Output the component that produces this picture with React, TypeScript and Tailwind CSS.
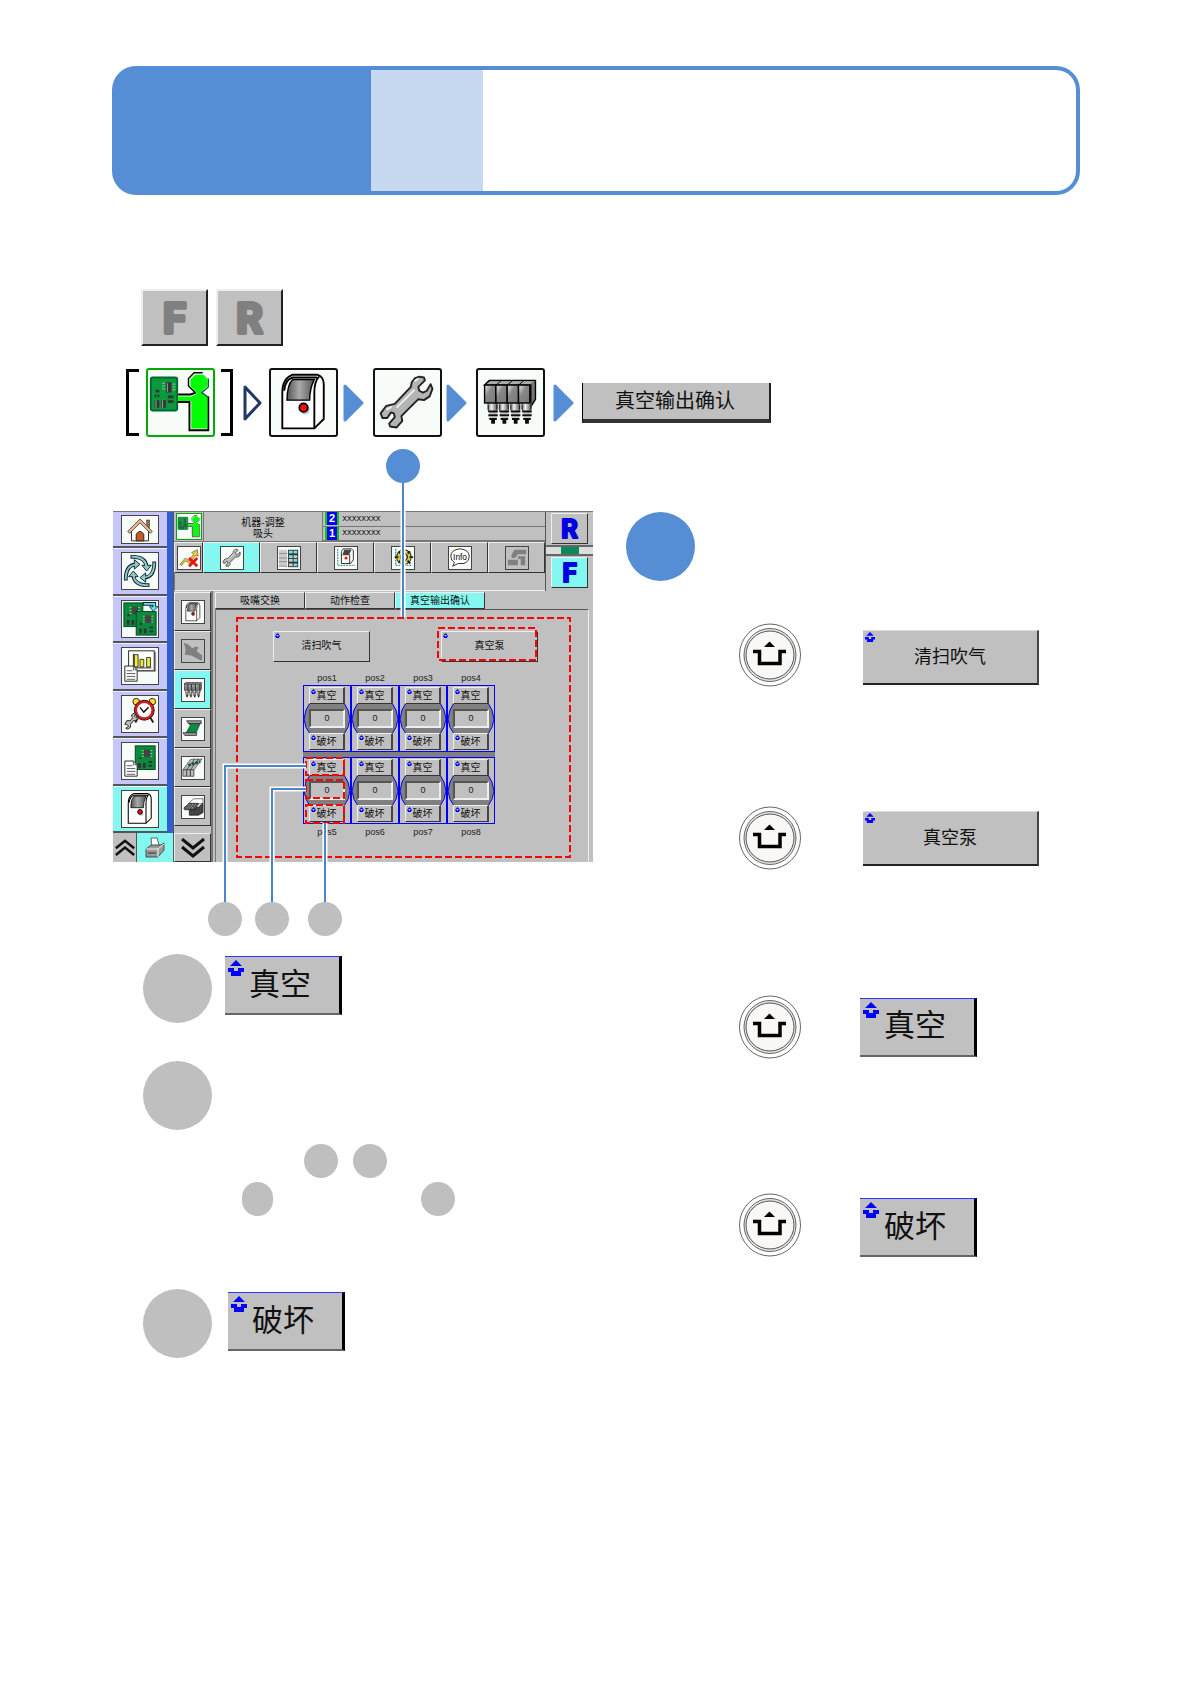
import type { ReactNode } from "react";

/* ---------- drawings ---------- */

function Machine() {
  return (
    <svg viewBox="0 0 69 69" className="h-full w-full" aria-hidden="true">
      <defs>
        <linearGradient id="glass" x1="0" x2="1">
          <stop offset="0" stopColor="#555" />
          <stop offset="0.45" stopColor="#aaa" />
          <stop offset="1" stopColor="#555" />
        </linearGradient>
      </defs>
      <path d="M12 62V24Q12 9 23 5H49Q56 7 56 15V52L46 62Z" fill="#fff" stroke="#000" strokeWidth="2" />
      <path d="M46 62V24Q46 12 51 7M14 22Q15 10 23 8H49" fill="none" stroke="#000" strokeWidth="2" />
      <path d="M17 32Q17 16 23 10H46Q41 20 41 32Z" fill="url(#glass)" stroke="#000" strokeWidth="1.5" />
      <circle cx="36" cy="42" r="5" fill="#bbb" />
      <circle cx="34.500" cy="40" r="4.500" fill="#e11" stroke="#000" strokeWidth="1.800" />
    </svg>
  );
}

function Wrench() {
  return (
    <svg viewBox="0 0 69 69" className="h-full w-full" aria-hidden="true">
      <path
        d="M47 7L52 8L53 11L46 18L47 22L51 24L55 22L59 15L61 20L58 28L52 32L46 31L28 49L29 54L23 61L16 60L15 57L21 50L20 46L17 45L13 51L8 51L6 46L12 38L21 36L38 18L39 13L42 9Z"
        fill="#b4b4b4"
        stroke="#222"
        strokeWidth="2"
        strokeLinejoin="round"
      />
      <path d="M23 40L42 21M42 12L46 9M12 42L18 39" stroke="#eee" strokeWidth="2" fill="none" />
    </svg>
  );
}

function GrayTool() {
  return (
    <svg viewBox="0 0 24 24" className="h-full w-full" aria-hidden="true">
      <path d="M2 3L7 5L11 9L15 7L18 8L16 12L22 17V22H20L10 17L3 16L4 11Z" fill="#808080" />
    </svg>
  );
}

function Operator() {
  return (
    <svg viewBox="0 0 69 69" className="h-full w-full" aria-hidden="true">
      <rect x="3" y="8" width="28" height="35" rx="2" fill="#0a9a3c" stroke="#063" strokeWidth="2" />
      <path d="M19 13h6v11h-6zM7 32h5v8H7zM14 32h5v8h-5zM21 27h6v3h-6zM21 32h6v3h-6zM8 21h4v3H8zM7 26h2v3H7zM10 26h2v3h-2z" fill="#333" />
      <path d="M15 14h3M15 17h3M15 20h3M26 15h3M26 18h3M26 21h3" stroke="#9c9" strokeWidth="1" />
      <path d="M8 32h1v8H8zM15 32h1v8h-1zM20 14h1v9h-1z" fill="#aaa" />
      <path d="M58 3H49L43 9V17L50 24" fill="none" stroke="#000" strokeWidth="1.500" />
      <path d="M32 26H45L51 24M64 28V64H44V34H32" fill="none" stroke="#000" strokeWidth="2" />
      <path d="M32 28H46L52 25L45 17V10L50 5H59L63 9V17L56 24L63 29V62H46V33H32Z" fill="#0f0" />
      <path d="M64 9V18L57 24L64 29" fill="none" stroke="#063" strokeWidth="1.500" />
    </svg>
  );
}

function Heads() {
  return (
    <svg viewBox="0 0 69 69" className="h-full w-full" aria-hidden="true">
      <defs>
        <linearGradient id="metal" x1="0" x2="1" y2="1">
          <stop offset="0" stopColor="#eee" />
          <stop offset="0.400" stopColor="#888" />
          <stop offset="1" stopColor="#777" />
        </linearGradient>
        <linearGradient id="pipe" x1="0" x2="1">
          <stop offset="0" stopColor="#666" />
          <stop offset="0.400" stopColor="#eee" />
          <stop offset="1" stopColor="#444" />
        </linearGradient>
      </defs>
      <path d="M7 16L12 11H61V31L56 39V16Z" fill="#777" stroke="#000" strokeWidth="1.500" />
      <path d="M8 15L13 12H59L55 15Z" fill="#aaa" />
      {[7, 19, 31, 43].map((x) => (
        <g key={x}>
          <path d={`M${x} 16l6-5`} stroke="#000" />
          <path d={`M${x + 3} 35h11v7h-2v3h-7v-3h-2z`} fill="url(#pipe)" />
          <rect x={x} y="16" width="12" height="19" fill="url(#metal)" stroke="#000" strokeWidth="1.500" />
          <path d={`M${x + 4} 37v7M${x + 13} 37v7`} stroke="#222" />
          <path d={`M${x + 5} 46h8M${x + 5} 50h8`} stroke="#ccc" strokeWidth="2" />
          <path d={`M${x + 4} 44h10M${x + 4} 48h10M${x + 5} 52h8`} stroke="#111" strokeWidth="2" />
          <path d={`M${x + 7} 52h4v5h-4z`} fill="#000" />
        </g>
      ))}
    </svg>
  );
}

function UpMark({ s }: { s: string }) {
  return (
    <svg viewBox="0 0 16 16" className={s} aria-hidden="true">
      <path d="M8 0L14 6H2ZM0 8h6v3h4V8h6v4h-3v4H3v-4H0z" fill="#00f" />
    </svg>
  );
}

function Home() {
  return (
    <svg viewBox="0 0 38 28" className="h-full w-full" aria-hidden="true">
      <path d="M10 14V26H28V14L19 6Z" fill="#fff" stroke="#222" />
      <path d="M26 4h3v8l-3-3z" fill="#a87040" stroke="#222" strokeWidth=".6" />
      <path d="M6 16L19 3L32 16L30 18L19 7L8 18Z" fill="#f0b890" stroke="#222" strokeWidth=".8" />
      <path d="M15 26V19Q19 13 23 19V26Z" fill="#c85a20" stroke="#222" />
    </svg>
  );
}

function Cycle() {
  return (
    <svg viewBox="0 0 38 38" className="h-full w-full" aria-hidden="true">
      {[0, 90, 180, 270].map((a) => (
        <g key={a} transform={`rotate(${a} 19 19)`}>
          <path d="M9 4H13Q25 5 26 14" fill="none" stroke="#123" strokeWidth="4" />
          <path d="M21 13H31L26 19Z" fill="#8ccac6" stroke="#123" strokeWidth="1" />
          <path d="M10 4H13Q25 5 26 15" fill="none" stroke="#8ccac6" strokeWidth="2" />
        </g>
      ))}
    </svg>
  );
}

function Pcb({ x, y, w, h }: { x: number; y: number; w: number; h: number }) {
  return (
    <g transform={`translate(${x} ${y})`}>
      <rect width={w} height={h} fill="#0a8a3c" stroke="#042" />
      <rect x={w - 12} y="4" width="7" height="8" fill="#444" />
      <path d={`M${w - 14} 5h2M${w - 14} 8h2M${w - 14} 11h2M${w - 5} 5h2M${w - 5} 8h2M${w - 5} 11h2`} stroke="#9d9" />
      <path d={`M3 ${h - 7}h3v5H3zM8 ${h - 7}h3v5H8zM14 ${h - 9}h4v2h-4zM14 ${h - 5}h4v2h-4zM3 ${h - 11}l2-3l2 3z`} fill="#333" />
    </g>
  );
}

function Doc({ y }: { y: number }) {
  return (
    <g transform={`translate(3 ${y})`}>
      <path d="M0 0H9L13 4V16H0Z" fill="#fff" stroke="#222" />
      <path d="M9 0V4H13M2 5h6M2 8h9M2 11h9M2 14h9" fill="none" stroke="#555" />
    </g>
  );
}

function Boards() {
  return (
    <svg viewBox="0 0 38 38" className="h-full w-full" aria-hidden="true">
      <Pcb x={2} y={2} w={20} h={25} />
      <Pcb x={15} y={11} w={21} h={25} />
      <path d="M22 3H34V7" fill="none" stroke="#123" strokeWidth="4" />
      <path d="M29 6H38L33 11Z" fill="#5fe0f0" stroke="#123" strokeWidth=".8" />
      <path d="M23 3H34V8" fill="none" stroke="#5fe0f0" strokeWidth="2" />
    </svg>
  );
}

function Report() {
  return (
    <svg viewBox="0 0 38 38" className="h-full w-full" aria-hidden="true">
      <rect x="8" y="4" width="28" height="21" fill="#999" />
      <rect x="7" y="3" width="27" height="21" fill="#fff" stroke="#222" />
      <path d="M12 6V21H31" fill="none" stroke="#222" />
      <path d="M13 7h4v13h-4zM19 12h4v8h-4zM26 10h4v10h-4z" fill="#ee3" stroke="#222" strokeWidth=".9" />
      <Doc y={19} />
    </svg>
  );
}

function Alarm() {
  return (
    <svg viewBox="0 0 38 38" className="h-full w-full" aria-hidden="true">
      <path d="M17 23L14 28M30 23L33 28" stroke="#222" strokeWidth="2" />
      <circle cx="15" cy="6" r="3.500" fill="#fd3" stroke="#222" />
      <circle cx="32" cy="6" r="3.500" fill="#fd3" stroke="#222" />
      <circle cx="23.500" cy="15" r="10.500" fill="#c22" stroke="#400" />
      <circle cx="23.500" cy="15" r="7.500" fill="#fff" />
      <path d="M19 12L23 17L28 12" fill="none" stroke="#111" strokeWidth="1.500" />
      <path d="M3 30L5 26L9 26L11 23L10 20L13 18L15 18L13 21L15 23L17 21V24L14 26L12 26L9 30L9 33L6 35L4 34L7 32L5 30Z" fill="#bbb" stroke="#222" />
    </svg>
  );
}

function BoardDoc() {
  return (
    <svg viewBox="0 0 38 38" className="h-full w-full" aria-hidden="true">
      <Pcb x={14} y={3} w={21} h={25} />
      <Doc y={19} />
    </svg>
  );
}

function Trend() {
  return (
    <svg viewBox="0 0 24 24" className="h-full w-full" aria-hidden="true">
      <path d="M2 19L8 12L12 15L17 8L15 6L21 3L22 10L19 9L13 18L8 15L4 20Z" fill="#ec3" stroke="#553" strokeWidth=".7" />
      <path d="M12 12L21 21M21 12L12 21" stroke="#e11" strokeWidth="3" />
    </svg>
  );
}

function ListIcon() {
  return (
    <svg viewBox="0 0 24 24" className="h-full w-full" aria-hidden="true">
      <path d="M1 3H10V21H1Z" fill="#ccc" />
      <path d="M1 7H10M1 12H10M1 16H10M1 21H10" stroke="#888" />
      <path d="M11 3H22V22H11Z" fill="#333" />
      {[4, 9, 13, 18].map((y, i) => (
        <g key={y}>
          <path d={`M12 ${y}h4v3h-4z`} fill={i > 1 ? "#ccc" : "#6fe6e6"} />
          <path d={`M17 ${y}h4v3h-4z`} fill={i === 1 ? "#ccc" : "#6fe6e6"} />
        </g>
      ))}
    </svg>
  );
}

function AxisMachine() {
  return (
    <svg viewBox="0 0 24 24" className="h-full w-full" aria-hidden="true">
      <path d="M3 2V20H22" stroke="#177" fill="none" strokeDasharray="2 1" />
      <path d="M7 18V5L9 2H18L20 4V14L17 18Z" fill="#fff" stroke="#222" />
      <path d="M8 9L10 3H18L15 9Z" fill="#444" />
      <path d="M16 18V8" stroke="#222" />
      <circle cx="12" cy="12" r="1.700" fill="#e11" />
    </svg>
  );
}

function AxisGear() {
  return (
    <svg viewBox="0 0 24 24" className="h-full w-full" aria-hidden="true">
      <path d="M4 2V20H22" stroke="#177" fill="none" strokeDasharray="2 1" />
      <path d="M5 2V20" stroke="#5cc" strokeDasharray="1 2" />
      <circle cx="13" cy="11" r="6" fill="none" stroke="#222" strokeWidth="5" />
      <circle cx="13" cy="11" r="6" fill="none" stroke="#dc3" strokeWidth="3" />
      <path d="M13 2V5M13 17V20M3 11H7M19 11H23M7 5L9 7M17 15L20 18M20 5L17 7M7 17L9 15" stroke="#222" strokeWidth="2" />
      <circle cx="13" cy="11" r="3.500" fill="#fff" stroke="#222" />
    </svg>
  );
}

function Info() {
  return (
    <svg viewBox="0 0 24 24" className="h-full w-full" aria-hidden="true">
      <path d="M6 17L4 21L10 18H16Q22 16 22 10Q22 3 12 2Q2 3 2 10Q2 15 6 17Z" fill="#fff" stroke="#222" />
      <text x="12" y="14" textAnchor="middle" fontFamily="Liberation Sans" fontSize="9">
        Info
      </text>
    </svg>
  );
}

function Unit() {
  return (
    <svg viewBox="0 0 24 24" className="h-full w-full" aria-hidden="true">
      <path d="M9 3H22V8H13L10 12H6V9ZM2 14H13V20H2ZM13 10H21V20H16V13H13Z" fill="#808080" />
    </svg>
  );
}

function Belt() {
  return (
    <svg viewBox="0 0 24 24" className="h-full w-full" aria-hidden="true">
      <path d="M7 6H20L15 17H4L9 8Z" fill="#0a8a3c" stroke="#033" strokeWidth=".6" />
      <path d="M5 3H21V6H7ZM1 16H16V19H3Z" fill="#999" stroke="#222" strokeWidth=".8" />
    </svg>
  );
}

function Feeder() {
  return (
    <svg viewBox="0 0 24 24" className="h-full w-full" aria-hidden="true">
      {[8, 4, 0].map((x) => (
        <g key={x}>
          <path d={`M${x + 1} 14L${x + 9} 3L${x + 14} 2L${x + 5} 14Z`} fill="#bbb" stroke="#444" strokeWidth=".8" />
          <path d={`M${x + 1} 14H${x + 5}V21H${x + 1}Z`} fill="#bbb" stroke="#333" strokeWidth=".8" />
        </g>
      ))}
      <path d="M7 9L20 5" stroke="#153" strokeWidth="3" strokeDasharray="3 1" />
    </svg>
  );
}

function Tray() {
  return (
    <svg viewBox="0 0 24 24" className="h-full w-full" aria-hidden="true">
      <path d="M7 8L13 3H23V8L17 9Z" fill="#fff" stroke="#333" strokeWidth=".7" />
      <path d="M8 14L18 12L23 8V18L18 21H8Z" fill="#444" stroke="#111" strokeWidth=".7" />
      <path d="M2 13L8 8H18L14 15H3Z" fill="#555" stroke="#111" strokeWidth=".7" />
      <path d="M5 13H13M7 11H15M8 9H16" stroke="#bbb" strokeDasharray="1 2" />
    </svg>
  );
}

function Printer() {
  return (
    <svg viewBox="0 0 24 24" className="h-6 w-6" aria-hidden="true">
      <path d="M9 11L8 2H14L16 9Z" fill="#fff" stroke="#444" strokeWidth=".8" />
      <path d="M3 13L8 9H18L21 7V14L15 21H3Z" fill="#999" stroke="#333" strokeWidth=".8" />
      <path d="M3 13H15L21 8M15 13V21" fill="none" stroke="#eee" />
      <path d="M5 17H13" stroke="#333" />
    </svg>
  );
}

function Chevrons({ up = false }: { up?: boolean }) {
  return (
    <svg viewBox="0 0 24 20" className={up ? "h-[17px] w-5 rotate-180" : "h-5 w-6"} aria-hidden="true">
      <path d="M1 1L12 10L23 1M1 9L12 18L23 9" fill="none" stroke="#111" strokeWidth="3" />
    </svg>
  );
}

function UpKey() {
  return (
    <button aria-label="上" className="h-16 w-[62px] shrink-0">
      <svg viewBox="0 0 62 64" className="h-full w-full" aria-hidden="true">
        <ellipse cx="31" cy="32" rx="30.500" ry="31" fill="#fff" stroke="#666" />
        <ellipse cx="31" cy="32" rx="26" ry="26.500" fill="#e6e6e0" stroke="#666" />
        <ellipse cx="31" cy="32" rx="24" ry="24" fill="#faf8f7" stroke="#555" />
        <path d="M14 28.500H20.500V40.500H41V28.500H47" fill="none" stroke="#000" strokeWidth="3.500" />
        <path d="M30.500 18.500L36 24H25Z" />
      </svg>
    </button>
  );
}

function Arrow({ hollow = false }: { hollow?: boolean }) {
  return (
    <svg viewBox="0 0 21 38" className="h-[38px] w-[21px] shrink-0" aria-hidden="true">
      {hollow ? (
        <path d="M2 3V35L17 19Z" fill="#fff" stroke="#1f3864" strokeWidth="3" strokeLinejoin="round" />
      ) : (
        <path d="M2 2V36L19 19Z" fill="#558ed5" stroke="#558ed5" strokeWidth="3" strokeLinejoin="round" />
      )}
    </svg>
  );
}

function Letter({ ch, fill, edge, size = 44 }: { ch: string; fill: string; edge: string; size?: number }) {
  return (
    <svg viewBox="0 0 66 56" className="h-full w-full" aria-hidden="true">
      <text x="33" y={28 + Math.round(size * 0.36)} textAnchor="middle" fontFamily="Roboto" fontWeight="700" fontSize={size} fill={fill} stroke={edge} strokeWidth="4" strokeLinejoin="round">
        {ch}
      </text>
    </svg>
  );
}

/* ---------- shared pieces ---------- */

const raised = "border border-t-[#eee] border-l-[#eee] border-b-[#333] border-r-[#333]";

function KeyIcon({ disabled, children }: { disabled?: boolean; children: ReactNode }) {
  return <span className={`h-6 w-6 border border-[#444] ${disabled ? "bg-[#c0c0c0]" : "bg-[#f8fcf8]"}`}>{children}</span>;
}

function SideKey({ label, on, disabled, children }: { label: string; on?: boolean; disabled?: boolean; children: ReactNode }) {
  return (
    <button aria-label={label} disabled={disabled} className={`flex h-[39px] w-[37px] items-center justify-center ${raised} ${on ? "bg-[#84f8f0]" : "bg-[#c0c0c0]"}`}>
      <KeyIcon disabled={disabled}>{children}</KeyIcon>
    </button>
  );
}

function ToolKey({ label, on, disabled, children }: { label: string; on?: boolean; disabled?: boolean; children: ReactNode }) {
  return (
    <button aria-label={label} disabled={disabled} className={`flex flex-1 items-center justify-center ${raised} ${on ? "bg-[#84f8f0]" : "bg-[#c0c0c0]"}`}>
      <KeyIcon disabled={disabled}>{children}</KeyIcon>
    </button>
  );
}

function MainKey({ label, on, children }: { label: string; on?: boolean; children: ReactNode }) {
  return (
    <button aria-label={label} className={`flex flex-1 items-center justify-center border-b-2 border-t border-b-[#555] border-t-[#eef] ${on ? "bg-[#84f8f0]" : "bg-[#c6c6fa]"}`}>
      <span className="h-[38px] w-[38px] border border-[#444] bg-[#f8fcf8]">{children}</span>
    </button>
  );
}

function GrayLetter({ ch }: { ch: string }) {
  return (
    <button aria-label={ch} className="h-[57px] w-[67px] border-2 border-b-[#222] border-l-[#eee] border-r-[#222] border-t-[#eee] bg-[#c0c0c0]">
      <Letter ch={ch} fill="#808080" edge="#808080" />
    </button>
  );
}

function BigKey({ text }: { text: string }) {
  return (
    <button className="relative flex h-[59px] w-[117px] items-center justify-center border-b-2 border-r-[3px] border-t border-b-[#666] border-r-black border-t-[#33f] bg-[#c0c0c0] pb-2 pr-1 text-[31px] leading-none text-[#111]">
      <span className="absolute left-[3px] top-[3px]">
        <UpMark s="h-4 w-4" />
      </span>
      {text}
    </button>
  );
}

function WideKey({ text }: { text: string }) {
  return (
    <button className="relative flex h-[55px] w-44 items-center justify-center border-b-2 border-r-2 border-t border-b-[#222] border-r-[#444] border-t-[#ddd] bg-[#c0c0c0] pb-1 text-lg leading-none text-[#111]">
      <span className="absolute left-[2px] top-px">
        <UpMark s="h-[10px] w-[10px]" />
      </span>
      {text}
    </button>
  );
}

function Dot({ s }: { s: string }) {
  return <span className={`shrink-0 rounded-full ${s}`} />;
}

/* ---------- machine screen ---------- */

function MiniKey({ text }: { text: string }) {
  return (
    <button className="relative mx-auto flex h-[17px] w-9 items-center justify-center border-b border-l border-r-2 border-t border-b-[#333] border-l-[#eee] border-r-[#444] border-t-[#eee] bg-[#c0c0c0] pb-px text-[10px] leading-none text-[#111]">
      <span className="absolute left-px top-px">
        <UpMark s="h-[5px] w-[5px]" />
      </span>
      {text}
    </button>
  );
}

function Nozzle() {
  return (
    <div className="relative border-x border-[#00f] py-px">
      <svg viewBox="0 0 46 31" preserveAspectRatio="none" className="absolute left-0 top-[17px] h-[31px] w-full" aria-hidden="true">
        <path d="M6 0H40Q45 6 46 16Q45 25 40 31H6Q1 25 0 16Q1 6 6 0Z" fill="#808080" stroke="#00f" />
        <path d="M6 0H40M6 31H40" stroke="#808080" strokeWidth="2" />
      </svg>
      <div className="relative flex flex-col">
        <MiniKey text="真空" />
        <output className="mx-auto my-[5px] flex h-[19px] w-9 items-center justify-center border-2 border-b-[#eee] border-l-[#555] border-r-[#eee] border-t-[#555] bg-[#c0c0c0] font-['Liberation_Sans',sans-serif] text-[9px] leading-none text-[#222]">
          0
        </output>
        <MiniKey text="破坏" />
      </div>
    </div>
  );
}

function NozzleRow() {
  return (
    <div className="grid grid-cols-4 border-y border-[#00f]">
      <Nozzle />
      <Nozzle />
      <Nozzle />
      <Nozzle />
    </div>
  );
}

function PosRow({ from }: { from: number }) {
  return (
    <div className="grid h-[13px] grid-cols-4 text-center font-['Liberation_Sans',sans-serif] text-[9px] leading-3 text-[#222]">
      {[0, 1, 2, 3].map((i) => (
        <span key={i}>pos{from + i}</span>
      ))}
    </div>
  );
}

function PanelKey({ text }: { text: string }) {
  return (
    <button className={`relative flex h-[31px] w-[97px] items-center justify-center bg-[#c0c0c0] pb-[3px] text-[10px] leading-none text-[#111] ${raised}`}>
      <span className="absolute left-px top-px">
        <UpMark s="h-[5px] w-[5px]" />
      </span>
      {text}
    </button>
  );
}

function Tab({ text, on }: { text: string; on?: boolean }) {
  return (
    <button role="tab" aria-selected={!!on} className={`flex w-[90px] items-center justify-center pb-px ${raised} ${on ? "bg-[#84f8f0]" : "bg-[#c0c0c0]"}`}>
      {text}
    </button>
  );
}

function Screen() {
  return (
    <div className="ml-px flex h-[351px] w-[480px] border-t border-[#777] bg-[#c0c0c0] text-[10px] leading-none text-[#111]">
      <div className="flex w-[60px] shrink-0 flex-col">
        <nav className="flex flex-1 border-r-[6px] border-[#3060d0]">
          <div className="flex w-full flex-col">
            <button aria-label="主页" className="flex h-9 items-center justify-center border-b-2 border-[#555] bg-[#c6c6fa]">
              <span className="h-[29px] w-[38px] border border-[#444] bg-[#f8fcf8]">
                <Home />
              </span>
            </button>
            <MainKey label="生产"><Cycle /></MainKey>
            <MainKey label="切换"><Boards /></MainKey>
            <MainKey label="统计"><Report /></MainKey>
            <MainKey label="维护"><Alarm /></MainKey>
            <MainKey label="数据"><BoardDoc /></MainKey>
            <MainKey label="机器" on><Machine /></MainKey>
          </div>
        </nav>
        <div className="flex h-[29px]">
          <button aria-label="上翻" className="flex w-6 items-center justify-center border-r border-[#555]">
            <Chevrons up />
          </button>
          <button aria-label="打印" className="flex flex-1 items-center justify-center bg-[#84f8f0]">
            <Printer />
          </button>
        </div>
      </div>

      <div className="flex flex-1 flex-col border-l border-[#555]">
        <div className="flex h-[79px]">
          <div className="flex flex-1 flex-col">
            <div className="flex h-[30px] border-b border-[#777]">
              <div className="flex w-[29px] items-center justify-center">
                <span className="h-[27px] w-[26px] border border-[#0a0] bg-[#f8fcf8]">
                  <Operator />
                </span>
              </div>
              <div className="flex w-[120px] items-center justify-center border-x border-[#777] text-center leading-[11px]">
                <p>
                  机器-调整
                  <br />
                  吸头
                </p>
              </div>
              <div className="flex flex-1 flex-col font-['Liberation_Mono',monospace] text-[8px]">
                {["2", "1"].map((n) => (
                  <div key={n} className="flex flex-1 items-center gap-[3px] border-b border-[#777] pl-[2px]">
                    <span className="border-x-2 border-[#0c0] bg-[#00f] px-[2px] font-['Liberation_Sans',sans-serif] text-[11px] font-bold leading-[13px] text-white">{n}</span>
                    <span>XXXXXXXX</span>
                  </div>
                ))}
              </div>
            </div>
            <div className="flex h-[31px]">
              <button aria-label="趋势" className={`flex w-[29px] items-center justify-center ${raised}`}>
                <KeyIcon><Trend /></KeyIcon>
              </button>
              <ToolKey label="调整" on><Wrench /></ToolKey>
              <ToolKey label="列表"><ListIcon /></ToolKey>
              <ToolKey label="轴"><AxisMachine /></ToolKey>
              <ToolKey label="设定"><AxisGear /></ToolKey>
              <ToolKey label="信息"><Info /></ToolKey>
              <ToolKey label="单元" disabled><Unit /></ToolKey>
            </div>
            <div className="flex-1 border-b border-l border-b-[#eee] border-l-[#777]" />
          </div>
          <div className="flex w-12 flex-col items-center border-l border-[#555] pt-px">
            <button aria-label="R" className={`h-[31px] w-[37px] ${raised}`}>
              <Letter ch="R" fill="#00f" edge="#00d" size={50} />
            </button>
            <div className="my-px flex h-[11px] w-full justify-center border-y-2 border-[#666] bg-[#ddd]">
              <span className="w-[18px] bg-[#0a8a5c]" />
            </div>
            <button aria-label="F" className={`h-[31px] w-[37px] bg-[#84f8f0] ${raised}`}>
              <Letter ch="F" fill="#00f" edge="#00d" size={50} />
            </button>
          </div>
        </div>

        <div className="flex flex-1">
          <div className="flex w-[39px] shrink-0 flex-col items-center justify-between border-r-2 border-[#777] pt-px">
            <div className="flex flex-col">
              <SideKey label="机器"><Machine /></SideKey>
              <SideKey label="工具" disabled><GrayTool /></SideKey>
              <SideKey label="吸头" on><Heads /></SideKey>
              <SideKey label="传送"><Belt /></SideKey>
              <SideKey label="供料器"><Feeder /></SideKey>
              <SideKey label="托盘"><Tray /></SideKey>
            </div>
            <button aria-label="下翻" className={`flex h-[29px] w-[37px] items-center justify-center ${raised}`}>
              <Chevrons />
            </button>
          </div>
          <div className="flex flex-1 flex-col pl-[2px] pr-1 pt-px">
            <div role="tablist" className="flex h-[17px]">
              <Tab text="吸嘴交换" />
              <Tab text="动作检查" />
              <Tab text="真空输出确认" on />
            </div>
            <div className="flex flex-1 flex-col border-l border-r border-t border-l-[#777] border-r-[#eee] border-t-[#555] pt-[21px]">
              <div className="flex gap-[71px] pl-[57px]">
                <PanelKey text="清扫吹气" />
                <PanelKey text="真空泵" />
              </div>
              <div className="ml-[87px] mt-[10px] w-48">
                <PosRow from={1} />
                <NozzleRow />
                <div className="h-[5px] bg-[#808080]" />
                <NozzleRow />
                <div className="pt-[2px]">
                  <PosRow from={5} />
                </div>
              </div>
            </div>
          </div>
        </div>
      </div>
    </div>
  );
}

/* Callout lines and frames laid over the screen */
function Callouts() {
  return (
    <svg viewBox="0 0 481 488" className="pointer-events-none absolute left-0 top-0 h-[488px] w-[481px]" fill="none" aria-hidden="true">
      <g stroke="#f00" strokeWidth="2" strokeDasharray="7 3">
        <rect x="125" y="169" width="333" height="239" />
        <rect x="326" y="179" width="98" height="32" />
        <rect x="194" y="309" width="38" height="17" />
        <rect x="194" y="331" width="38" height="18" />
        <rect x="194" y="356" width="38" height="18" />
      </g>
      <g stroke="#fff" strokeWidth="5">
        <path d="M291 62V168" />
        <path d="M194 317H113V413" />
        <path d="M194 340H160V413" />
        <path d="M213 374V413" />
      </g>
      <g stroke="#4a86c8" strokeWidth="2">
        <path d="M291 34V168" />
        <path d="M194 317H113V455" />
        <path d="M194 340H160V455" />
        <path d="M213 374V455" />
      </g>
      <circle cx="291" cy="17" r="17" fill="#558ed5" />
      <circle cx="113" cy="470" r="17" fill="#bfbfbf" />
      <circle cx="160" cy="470" r="17" fill="#bfbfbf" />
      <circle cx="213" cy="470" r="17" fill="#bfbfbf" />
    </svg>
  );
}

function Tile({ green, children }: { green?: boolean; children: ReactNode }) {
  return (
    <span className={`h-[69px] w-[69px] shrink-0 rounded-[3px] border-2 bg-[#f8fcf8] ${green ? "border-[#0a0]" : "border-[#111]"}`}>
      {children}
    </span>
  );
}

export default function App() {
  return (
    <main className="flex flex-col bg-white pl-[112px] pr-[110px] pt-[66px] font-['Noto_Sans_CJK_SC',sans-serif]">
      <header className="flex h-[129px] rounded-3xl bg-[#558ed5] py-1 pr-1">
        <div className="w-[259px] shrink-0" />
        <div className="w-28 shrink-0 bg-[#c6d9f1]" />
        <div className="flex-1 rounded-r-[20px] bg-white" />
      </header>

      <div className="mt-[94px] flex gap-2 pl-[29px]">
        <GrayLetter ch="F" />
        <GrayLetter ch="R" />
      </div>

      <div className="mt-[22px] flex items-center pl-[14px]">
        <span className="mr-[7px] h-[67px] w-[13px] border-y-[3px] border-l-[3px] border-black" />
        <Tile green><Operator /></Tile>
        <span className="ml-[6px] mr-[10px] h-[67px] w-3 border-y-[3px] border-r-[3px] border-black" />
        <Arrow hollow />
        <span className="w-[5px]" />
        <Tile><Machine /></Tile>
        <span className="w-[5px]" />
        <Arrow />
        <span className="w-[9px]" />
        <Tile><Wrench /></Tile>
        <span className="w-1" />
        <Arrow />
        <span className="w-[9px]" />
        <Tile><Heads /></Tile>
        <span className="w-2" />
        <Arrow />
        <button className="ml-2 h-10 w-[189px] border-b-4 border-l border-r-2 border-b-[#333] border-l-black border-r-[#222] bg-[#c0c0c0] pb-[2px] pr-[2px] text-xl leading-none text-[#111]">
          真空输出确认
        </button>
      </div>

      <div className="mt-3 flex">
        <section className="w-[481px] shrink-0">
          <figure className="relative pb-[75px] pt-[62px]">
            <Screen />
            <Callouts />
          </figure>
          <div className="mt-[17px] flex gap-[13px] pl-[31px]">
            <Dot s="h-[69px] w-[69px] bg-[#bfbfbf]" />
            <div className="pt-[2px]">
              <BigKey text="真空" />
            </div>
          </div>
          <div className="mt-[38px] flex pl-[31px]">
            <Dot s="h-[69px] w-[69px] bg-[#bfbfbf]" />
          </div>
          <div className="mt-[14px] flex gap-[15px] pl-48">
            <Dot s="h-[34px] w-[34px] bg-[#bfbfbf]" />
            <Dot s="h-[34px] w-[34px] bg-[#bfbfbf]" />
          </div>
          <div className="mt-1 flex gap-[148px] pl-[130px]">
            <Dot s="h-[34px] w-[31px] bg-[#bfbfbf]" />
            <Dot s="h-[34px] w-[34px] bg-[#bfbfbf]" />
          </div>
          <div className="mt-[73px] flex gap-4 pl-[31px]">
            <Dot s="h-[69px] w-[69px] bg-[#bfbfbf]" />
            <div className="pt-[3px]">
              <BigKey text="破坏" />
            </div>
          </div>
        </section>

        <section className="flex-1 pl-[33px] pt-[63px]">
          <div className="flex">
            <Dot s="h-[69px] w-[69px] bg-[#558ed5]" />
          </div>
          <div className="mt-[42px] flex items-center gap-[62px] pl-[113px]">
            <UpKey />
            <div className="pt-1">
              <WideKey text="清扫吹气" />
            </div>
          </div>
          <div className="mt-[119px] flex items-center gap-[62px] pl-[113px]">
            <UpKey />
            <WideKey text="真空泵" />
          </div>
          <div className="mt-[125px] flex items-center gap-[59px] pl-[113px]">
            <UpKey />
            <BigKey text="真空" />
          </div>
          <div className="mt-[134px] flex items-end gap-[59px] pl-[113px]">
            <UpKey />
            <BigKey text="破坏" />
          </div>
        </section>
      </div>
    </main>
  );
}
